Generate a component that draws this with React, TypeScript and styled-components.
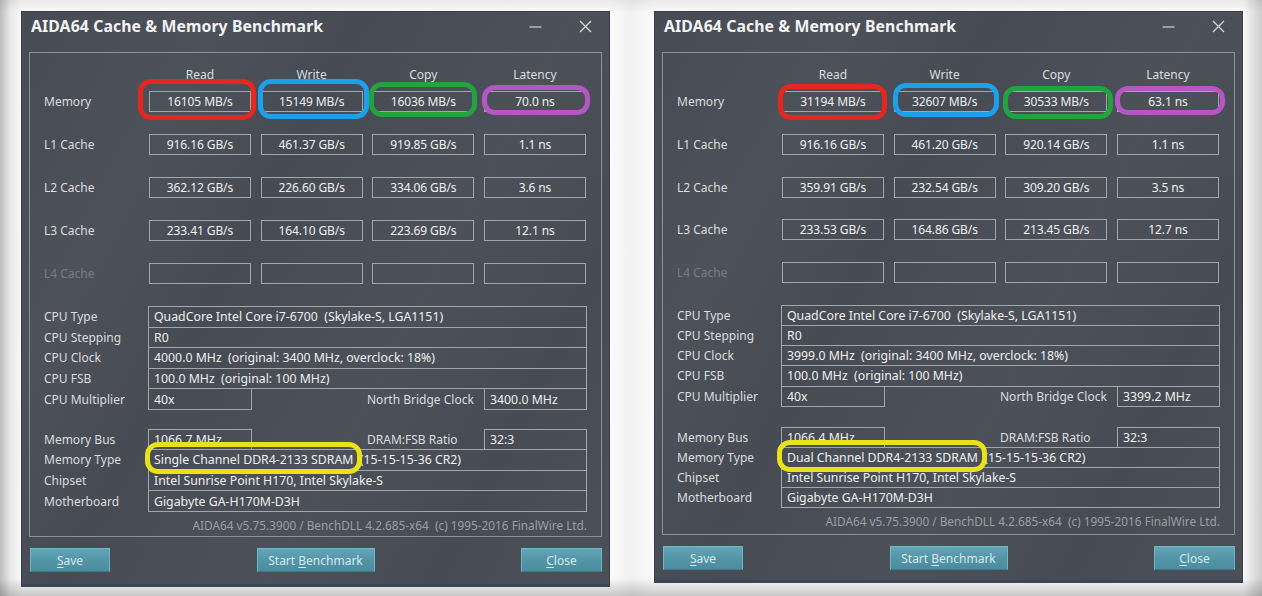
import React from "react";
import styled, { createGlobalStyle } from "styled-components";

const Global = createGlobalStyle`
  html, body { margin: 0; padding: 0; }
  body {
    width: 1262px; height: 596px; overflow: hidden;
    font-family: "Noto Sans", "Open Sans", "DejaVu Sans", sans-serif;
  }
`;

const Page = styled.div`
  width: 1262px; height: 596px; box-sizing: border-box;
  display: flex; align-items: flex-start; gap: 44px;
  padding: 11px 0 0 21px;
  background:
    linear-gradient(to bottom, rgba(0,0,0,0.07) 0px, rgba(0,0,0,0) 12px, rgba(0,0,0,0) 578px, rgba(0,0,0,0.2) 596px),
    linear-gradient(to right, #bdbdbd 0px, #e8e8e8 10px, #fafafa 22px, #fafafa 612px, #f1f1f1 630px, #fafafa 652px, #fafafa 1243px, #e4e4e4 1252px, #cdcdcd 1262px);
`;

const Win = styled.div<{ $h: number }>`
  position: relative;
  width: 589px; height: ${(p) => p.$h}px; box-sizing: border-box;
  background-color: #474b54;
  background-image: linear-gradient(118deg, rgba(255,255,255,0) 0%, rgba(255,255,255,0.035) 22%, rgba(255,255,255,0) 38%, rgba(255,255,255,0.03) 62%, rgba(255,255,255,0) 80%, rgba(255,255,255,0.025) 95%);
  border: 1px solid #3a3e45;
  border-bottom: 3px solid #3d4654;
  padding: 0 7px;
  display: flex; flex-direction: column;
  color: #dcdfe2;
`;

const TitleBar = styled.div`
  height: 28px; margin-bottom: 12px;
  display: flex; align-items: center;
  padding: 0 10px 0 2px;
`;

const Title = styled.div`
  font-size: 15.8px; font-weight: 700; color: #f2f3f4; letter-spacing: 0.1px;
  flex: 1;
`;

const Ctrl = styled.svg`
  display: block; flex: none;
`;

const Group = styled.div<{ $h: number }>`
  height: ${(p) => p.$h}px; box-sizing: border-box;
  border: 1px solid #8c9199;
  padding: 13px 14px 0 14px;
  display: flex; flex-direction: column;
`;

const Cols = styled.div`
  display: grid;
  grid-template-columns: 95.33px repeat(4, 102px);
  column-gap: 9.67px;
  align-items: center;
`;

const HeadRow = styled(Cols)`
  height: 16px; margin-bottom: 9px;
`;

const Head = styled.div`
  text-align: center; font-size: 12px; color: #dadcdf;
`;

const BenchRows = styled(Cols)<{ $gap: number }>`
  row-gap: ${(p) => p.$gap}px;
`;

const RowLabel = styled.div<{ $dim?: boolean }>`
  font-size: 12px;
  color: ${(p) => (p.$dim ? "#787d85" : "#dadcdf")};
  white-space: nowrap;
`;

const Value = styled.div`
  position: relative;
  height: 21px; box-sizing: border-box;
  border: 1px solid #a2a7ad;
  display: flex; align-items: center; justify-content: center;
  font-size: 12px; letter-spacing: -0.1px; color: #eef0f1; white-space: nowrap;
`;

const Ring = styled.span<{ $c: string; $x: number; $y: number; $w: number; $h: number }>`
  position: absolute;
  left: ${(p) => p.$x - 1}px; top: ${(p) => p.$y - 1}px;
  width: ${(p) => p.$w}px; height: ${(p) => p.$h}px;
  box-sizing: border-box;
  border: 5px solid ${(p) => p.$c};
  border-radius: 13px;
  pointer-events: none; z-index: 2;
`;

const InfoStack = styled.div<{ $mt: number }>`
  margin-top: ${(p) => p.$mt}px;
  display: flex; flex-direction: column;
`;

const InfoRow = styled.div<{ $h: number }>`
  display: grid; grid-template-columns: 104px 1fr;
  height: ${(p) => p.$h}px; align-items: stretch;
  & + & { margin-top: -1px; }
`;

const InfoLabel = styled(RowLabel)`
  display: flex; align-items: center;
`;

const InfoBox = styled.div<{ $w?: number }>`
  position: relative;
  box-sizing: border-box;
  border: 1px solid #a2a7ad;
  ${(p) => (p.$w ? `width: ${p.$w}px; flex: none;` : "")}
  display: flex; align-items: center;
  padding-left: 5px;
  font-size: 12.3px; color: #eef0f1; white-space: pre;
`;

const Split = styled.div`
  display: flex; align-items: stretch;
`;

const SideLabel = styled(RowLabel)`
  flex: 1; margin-left: 115px;
  display: flex; align-items: center;
`;

const Footer = styled.div<{ $mt: number }>`
  margin-top: ${(p) => p.$mt}px;
  height: 16px; line-height: 16px;
  text-align: right; font-size: 11.8px; color: #9a9fa6; white-space: pre;
`;

const Buttons = styled.div<{ $mt: number }>`
  margin-top: ${(p) => p.$mt}px;
  display: flex; justify-content: space-between; align-items: center;
  padding: 0 0 0 1px;
`;

const Btn = styled.div<{ $w: number }>`
  width: ${(p) => p.$w}px; height: 24px; box-sizing: border-box;
  background: linear-gradient(to bottom, #63a6b7 0%, #5497a9 45%, #4b8c9e 100%);
  border: 1px solid #72b4c4;
  border-bottom-color: #3f7888;
  display: flex; align-items: center; justify-content: center;
  font-size: 12px; color: #d6e7ec;
  & u { text-decoration-thickness: 1px; text-underline-offset: 2px; }
`;

type RingSpec = { c: string; x: number; y: number; w: number; h: number };

type WinSpec = {
  h: number;
  groupH: number;
  benchGap: number;
  cpuGap: number;
  rowH: number;
  memGap: number;
  footGap: number;
  btnGap: number;
  bench: { label: string; dim?: boolean; vals: string[] }[];
  rings: (RingSpec | null)[];
  clock: string;
  nb: string;
  bus: string;
  memType: string;
  memRing: RingSpec;
};

const RED = "#e5281f";
const BLUE = "#1d9fea";
const GREEN = "#22a33f";
const PURPLE = "#b457c4";
const YELLOW = "#e9e21b";

const windows: WinSpec[] = [
  {
    h: 576, groupH: 485, benchGap: 22, cpuGap: 22, rowH: 21.6, memGap: 18.6, footGap: 5, btnGap: 11,
    bench: [
      { label: "Memory", vals: ["16105 MB/s", "15149 MB/s", "16036 MB/s", "70.0 ns"] },
      { label: "L1 Cache", vals: ["916.16 GB/s", "461.37 GB/s", "919.85 GB/s", "1.1 ns"] },
      { label: "L2 Cache", vals: ["362.12 GB/s", "226.60 GB/s", "334.06 GB/s", "3.6 ns"] },
      { label: "L3 Cache", vals: ["233.41 GB/s", "164.10 GB/s", "223.69 GB/s", "12.1 ns"] },
      { label: "L4 Cache", dim: true, vals: ["", "", "", ""] },
    ],
    rings: [
      { c: RED, x: -11, y: -12, w: 118, h: 41 },
      { c: BLUE, x: -3, y: -12, w: 111, h: 40 },
      { c: GREEN, x: -3, y: -9, w: 108, h: 35 },
      { c: PURPLE, x: -2, y: -6, w: 108, h: 30 },
    ],
    clock: "4000.0 MHz  (original: 3400 MHz, overclock: 18%)",
    nb: "3400.0 MHz",
    bus: "1066.7 MHz",
    memType: "Single Channel DDR4-2133 SDRAM  (15-15-15-36 CR2)",
    memRing: { c: YELLOW, x: -3, y: -7, w: 217, h: 32 },
  },
  {
    h: 572, groupH: 483, benchGap: 21.75, cpuGap: 21.75, rowH: 21.2, memGap: 20, footGap: 5, btnGap: 11,
    bench: [
      { label: "Memory", vals: ["31194 MB/s", "32607 MB/s", "30533 MB/s", "63.1 ns"] },
      { label: "L1 Cache", vals: ["916.16 GB/s", "461.20 GB/s", "920.14 GB/s", "1.1 ns"] },
      { label: "L2 Cache", vals: ["359.91 GB/s", "232.54 GB/s", "309.20 GB/s", "3.5 ns"] },
      { label: "L3 Cache", vals: ["233.53 GB/s", "164.86 GB/s", "213.45 GB/s", "12.7 ns"] },
      { label: "L4 Cache", dim: true, vals: ["", "", "", ""] },
    ],
    rings: [
      { c: RED, x: -4, y: -7, w: 109, h: 36 },
      { c: BLUE, x: -1, y: -8, w: 106, h: 34 },
      { c: GREEN, x: -2, y: -5, w: 110, h: 33 },
      { c: PURPLE, x: -2, y: -5, w: 110, h: 29 },
    ],
    clock: "3999.0 MHz  (original: 3400 MHz, overclock: 18%)",
    nb: "3399.2 MHz",
    bus: "1066.4 MHz",
    memType: "Dual Channel DDR4-2133 SDRAM  (15-15-15-36 CR2)",
    memRing: { c: YELLOW, x: -4, y: -7, w: 210, h: 32 },
  },
];

const RingMark = ({ r }: { r: RingSpec }) => <Ring $c={r.c} $x={r.x} $y={r.y} $w={r.w} $h={r.h} />;

const BenchWindow = ({ w }: { w: WinSpec }) => (
  <Win $h={w.h}>
    <TitleBar>
      <Title>AIDA64 Cache &amp; Memory Benchmark</Title>
      <Ctrl width="13" height="13" viewBox="0 0 13 13" style={{ marginRight: 37 }}>
        <line x1="0.5" y1="7" x2="12.5" y2="7" stroke="#cfd2d6" strokeWidth="1.2" />
      </Ctrl>
      <Ctrl width="13" height="13" viewBox="0 0 13 13">
        <path d="M1 1 L12 12 M12 1 L1 12" stroke="#d6d9dc" strokeWidth="1.3" fill="none" />
      </Ctrl>
    </TitleBar>
    <Group $h={w.groupH}>
      <HeadRow>
        <span />
        <Head>Read</Head>
        <Head>Write</Head>
        <Head>Copy</Head>
        <Head>Latency</Head>
      </HeadRow>
      <BenchRows $gap={w.benchGap}>
        {w.bench.map((row, ri) => (
          <React.Fragment key={row.label}>
            <RowLabel $dim={row.dim}>{row.label}</RowLabel>
            {row.vals.map((v, ci) => {
              const ring = ri === 0 ? w.rings[ci] : null;
              return (
                <Value key={ci}>
                  {v}
                  {ring && <RingMark r={ring} />}
                </Value>
              );
            })}
          </React.Fragment>
        ))}
      </BenchRows>
      <InfoStack $mt={w.cpuGap}>
        <InfoRow $h={w.rowH}>
          <InfoLabel>CPU Type</InfoLabel>
          <InfoBox>{"QuadCore Intel Core i7-6700  (Skylake-S, LGA1151)"}</InfoBox>
        </InfoRow>
        <InfoRow $h={w.rowH}>
          <InfoLabel>CPU Stepping</InfoLabel>
          <InfoBox>R0</InfoBox>
        </InfoRow>
        <InfoRow $h={w.rowH}>
          <InfoLabel>CPU Clock</InfoLabel>
          <InfoBox>{w.clock}</InfoBox>
        </InfoRow>
        <InfoRow $h={w.rowH}>
          <InfoLabel>CPU FSB</InfoLabel>
          <InfoBox>{"100.0 MHz  (original: 100 MHz)"}</InfoBox>
        </InfoRow>
        <InfoRow $h={w.rowH}>
          <InfoLabel>CPU Multiplier</InfoLabel>
          <Split>
            <InfoBox $w={104}>40x</InfoBox>
            <SideLabel>North Bridge Clock</SideLabel>
            <InfoBox $w={103}>{w.nb}</InfoBox>
          </Split>
        </InfoRow>
      </InfoStack>
      <InfoStack $mt={w.memGap}>
        <InfoRow $h={w.rowH}>
          <InfoLabel>Memory Bus</InfoLabel>
          <Split>
            <InfoBox $w={104}>{w.bus}</InfoBox>
            <SideLabel>DRAM:FSB Ratio</SideLabel>
            <InfoBox $w={103}>32:3</InfoBox>
          </Split>
        </InfoRow>
        <InfoRow $h={w.rowH}>
          <InfoLabel>Memory Type</InfoLabel>
          <InfoBox>
            {w.memType}
            <RingMark r={w.memRing} />
          </InfoBox>
        </InfoRow>
        <InfoRow $h={w.rowH}>
          <InfoLabel>Chipset</InfoLabel>
          <InfoBox>Intel Sunrise Point H170, Intel Skylake-S</InfoBox>
        </InfoRow>
        <InfoRow $h={w.rowH}>
          <InfoLabel>Motherboard</InfoLabel>
          <InfoBox>Gigabyte GA-H170M-D3H</InfoBox>
        </InfoRow>
      </InfoStack>
      <Footer $mt={w.footGap}>{"AIDA64 v5.75.3900 / BenchDLL 4.2.685-x64  (c) 1995-2016 FinalWire Ltd."}</Footer>
    </Group>
    <Buttons $mt={w.btnGap}>
      <Btn $w={80}><span><u>S</u>ave</span></Btn>
      <Btn $w={118}><span>Start <u>B</u>enchmark</span></Btn>
      <Btn $w={81}><span><u>C</u>lose</span></Btn>
    </Buttons>
  </Win>
);

export default function App() {
  return (
    <>
      <Global />
      <Page>
        {windows.map((w, i) => (
          <BenchWindow key={i} w={w} />
        ))}
      </Page>
    </>
  );
}
